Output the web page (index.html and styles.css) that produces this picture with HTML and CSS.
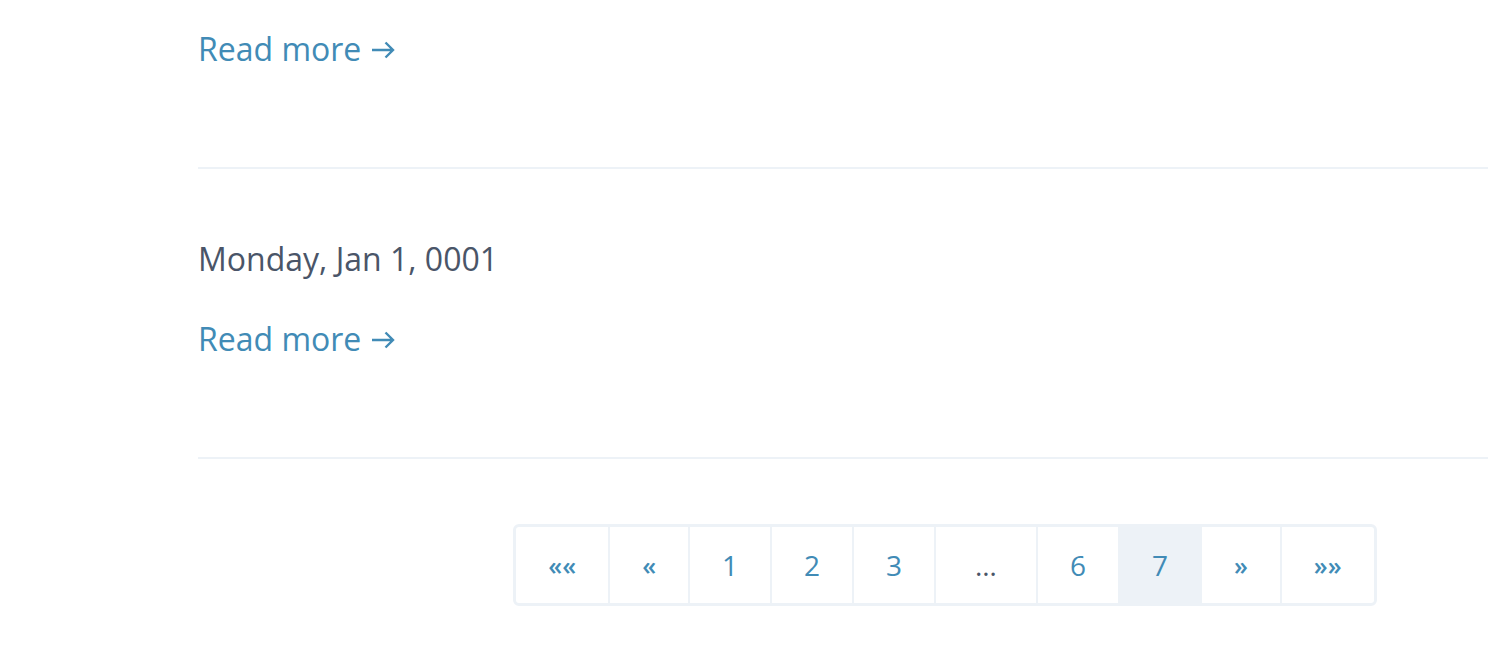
FILE: index.html
```html
<!DOCTYPE html>
<html lang="en">

<head>
    <meta charset="UTF-8">
    <meta name="viewport" content="width=device-width, initial-scale=1.0">
    <title>Posts</title>
    <link rel="stylesheet" href="styles.css">
</head>

<body>

    <div class="main-container">
        <div class="post-list">
            <!-- Post -->
            <article class="post">
                <p class="post-date">Monday, Jan 1, 0001</p>
                <a class="read-more" href="#">Read more
                    <svg class="arrow" width="24" height="18" viewBox="0 0 24 18" aria-hidden="true">
                        <path d="M1 9H22M14.5 1.5L22 9L14.5 16.5" fill="none" stroke="currentColor" stroke-width="2.4" />
                    </svg>
                </a>
            </article>

            <!-- Post -->
            <article class="post">
                <p class="post-date">Monday, Jan 1, 0001</p>
                <a class="read-more" href="#">Read more
                    <svg class="arrow" width="24" height="18" viewBox="0 0 24 18" aria-hidden="true">
                        <path d="M1 9H22M14.5 1.5L22 9L14.5 16.5" fill="none" stroke="currentColor" stroke-width="2.4" />
                    </svg>
                </a>
            </article>
        </div>

        <nav class="pager-wrap">
            <ul class="pager">
                <li><a href="#" class="quote">««</a></li>
                <li><a href="#" class="quote">«</a></li>
                <li><a href="#">1</a></li>
                <li><a href="#">2</a></li>
                <li><a href="#">3</a></li>
                <li><span class="gap">…</span></li>
                <li><a href="#">6</a></li>
                <li class="active"><a href="#">7</a></li>
                <li><a href="#" class="quote">»</a></li>
                <li><a href="#" class="quote">»»</a></li>
            </ul>
        </nav>
    </div>

</body>

</html>
```

FILE: styles.css
```css
body {
    margin: 0;
    background: #ffffff;
    font-family: "Open Sans", "Noto Sans", sans-serif;
    overflow: hidden;
}

.main-container {
    margin-left: 198px;
    width: 1494px;
}

.post-list {
    margin-top: -121px;
}

.post {
    padding: 66px 0 94px;
    border-bottom: 2px solid #edf2f7;
}

.post-date {
    margin: 0 0 32px;
    font-size: 32px;
    line-height: 48px;
    color: #4a5568;
}

.read-more {
    display: flex;
    align-items: center;
    gap: 10px;
    font-size: 32px;
    line-height: 48px;
    color: #418bb6;
    text-decoration: none;
}

.arrow {
    margin-top: 2px;
}

.pager-wrap {
    display: flex;
    justify-content: center;
    padding-top: 65px;
}

.pager {
    display: flex;
    gap: 2px;
    margin: 0;
    padding: 0;
    list-style: none;
    background: #edf2f7;
    border: 3px solid #edf2f7;
    border-radius: 6px;
}

.pager li {
    display: flex;
    background: #ffffff;
}

.pager li:first-child {
    border-radius: 3px 0 0 3px;
}

.pager li:last-child {
    border-radius: 0 3px 3px 0;
}

.pager li.active {
    background: #edf2f7;
}

.pager a,
.pager .gap {
    display: flex;
    align-items: center;
    justify-content: center;
    height: 76px;
    padding: 0 32px;
    font-size: 28px;
    color: #418bb6;
    text-decoration: none;
}

.pager .quote {
    font-size: 25px;
    font-weight: 600;
    padding: 0 32px;
}

.pager .gap {
    padding: 0 39px;
    color: #4a5568;
}
```
